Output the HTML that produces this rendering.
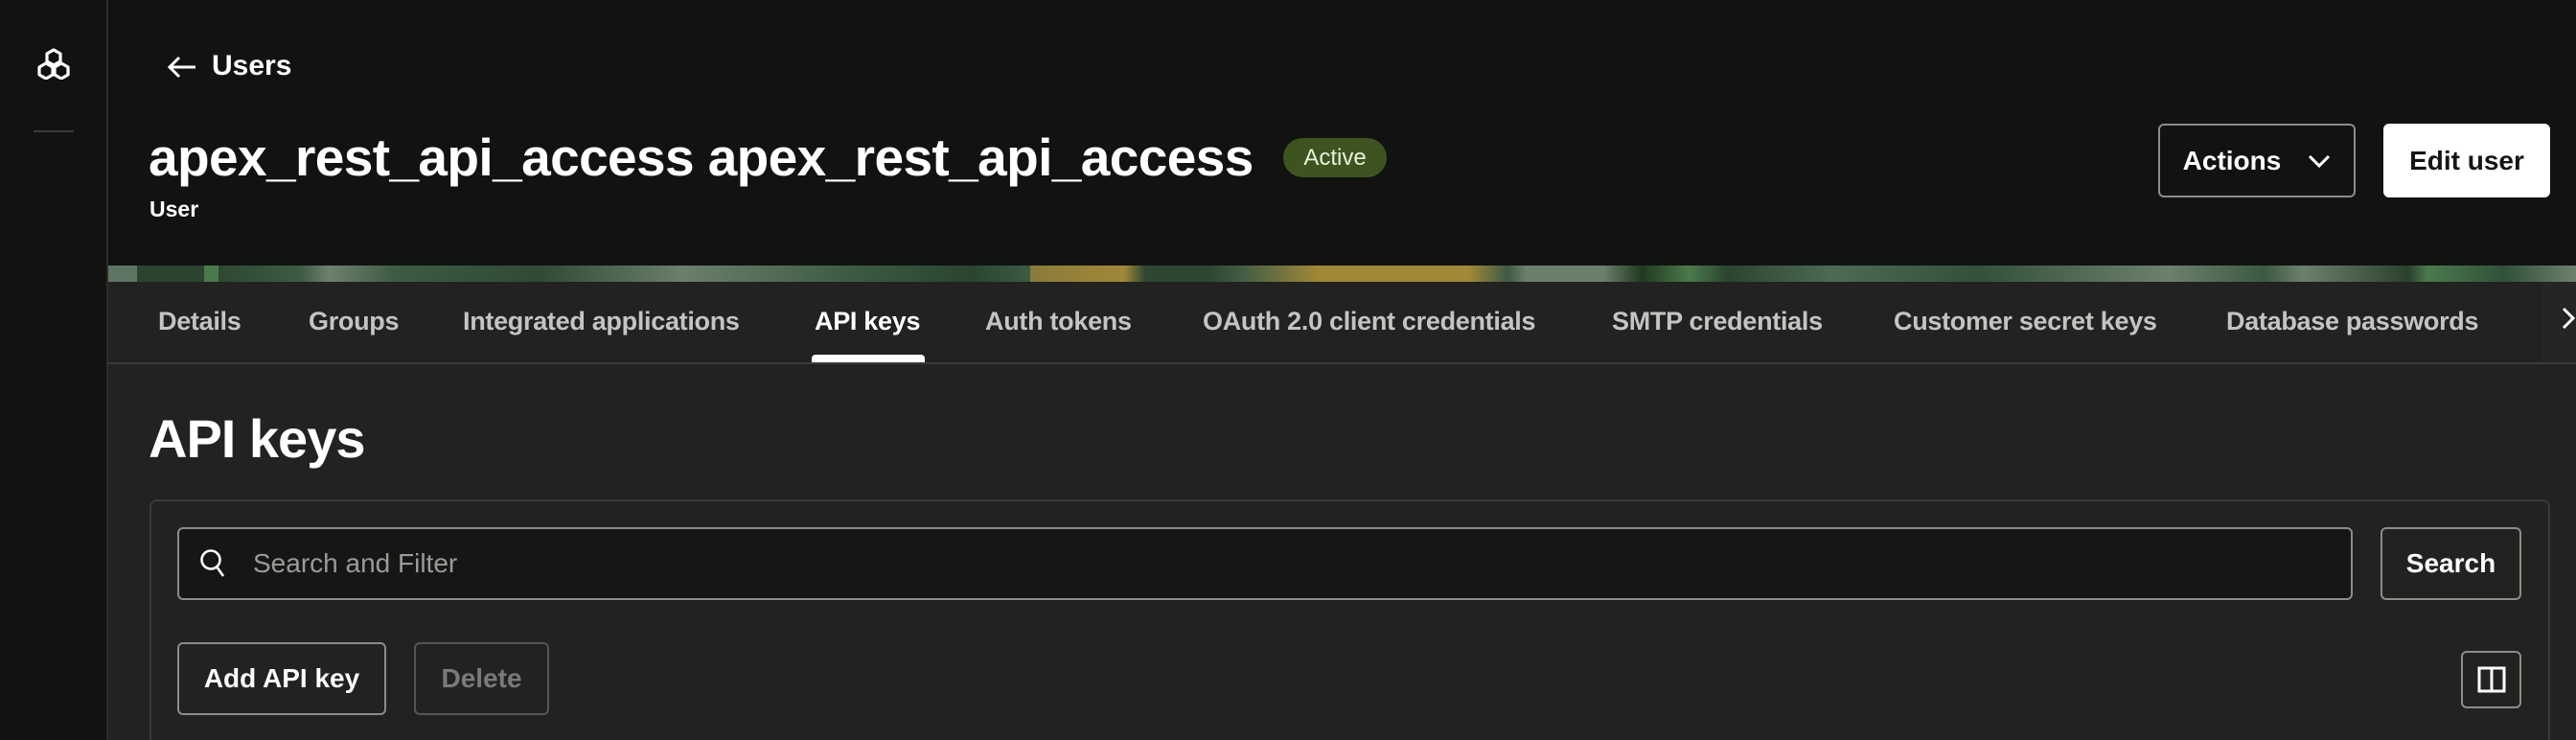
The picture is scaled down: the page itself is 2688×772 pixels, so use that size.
<!DOCTYPE html>
<html style="overflow:hidden;height:772px"><head><meta charset="utf-8"><style>
*{margin:0;padding:0;box-sizing:border-box}
body{width:2688px;height:772px;overflow:hidden;background:#222221;font-family:"Liberation Sans",sans-serif;color:#fff;position:relative}
.abs{position:absolute}
.side{left:0;top:0;width:113px;height:772px;background:#121211;border-right:2px solid #2c2c2b}
.hdr{left:113px;top:0;width:2575px;height:277px;background:#121211}
.banner{left:113px;top:277px;width:2575px;height:17px;background:linear-gradient(90deg,#5d7563 0,#5d7563 30px,#2b4430 30px,#2b4430 100px,#4a7a4c 100px,#4a7a4c 115px,#2e4832 115px,#3d5a43 200px,#6d806f 230px,#3d5a42 300px,#304a36 450px,#6a7f6c 600px,#3c5a41 780px,#2a4430 900px,#3d5a43 962px,#8a7a3a 962px,#a08838 1060px,#2e4732 1082px,#2e4732 1150px,#3f5b44 1180px,#a08838 1263px,#a08838 1420px,#3d5a43 1460px,#6c7f6d 1480px,#6c7f6d 1560px,#21391f 1600px,#4a7a4c 1650px,#2b4430 1690px,#4e6a54 1800px,#33503a 1950px,#6c806e 2150px,#3b5940 2250px,#6c806e 2290px,#2a412d 2400px,#4a7a4c 2420px,#31503a 2500px,#6d806f 2575px)}
.tabs{left:113px;top:294px;width:2575px;height:86px;border-bottom:2px solid #3a3a39;background:#222221}
.tab{position:absolute;top:26px;font-size:27px;color:#c4c4c2;white-space:nowrap;font-weight:bold;letter-spacing:-0.3px}
.btn{position:absolute;border:2px solid #8c8c8a;border-radius:6px;font-weight:bold;display:flex;align-items:center;justify-content:center;font-size:28px}
</style></head><body>
<div class="abs side">
 <svg class="abs" style="left:38px;top:50px" width="36" height="33" viewBox="0 0 36 33" fill="none" stroke="#fff" stroke-width="3.2" stroke-linejoin="round">
  <path d="M18 2l7 4v8l-7 4-7-4V6z"/><path d="M10 16l7 4v8l-7 4-7-4v-8z"/><path d="M26 16l7 4v8l-7 4-7-4v-8z"/>
 </svg>
 <div class="abs" style="left:35px;top:136px;width:42px;height:2px;background:#3a3a39"></div>
</div>
<div class="abs hdr"></div>
<svg class="abs" style="left:174px;top:58px" width="32" height="24" viewBox="0 0 32 24" fill="none" stroke="#fff" stroke-width="3"><path d="M30 12H3M13 2L3 12l10 10"/></svg>
<div class="abs" style="left:221px;top:52px;font-size:30px;font-weight:bold">Users</div>
<div class="abs" style="left:155px;top:132px;font-size:55px;font-weight:bold;letter-spacing:-0.6px;white-space:nowrap">apex_rest_api_access apex_rest_api_access</div>
<div class="abs" style="left:1339px;top:144px;width:108px;height:41px;border-radius:21px;background:#3d5420;color:#e8f0d8;font-size:24px;display:flex;align-items:center;justify-content:center">Active</div>
<div class="abs" style="left:156px;top:205px;font-size:23px;font-weight:bold">User</div>
<div class="btn" style="left:2252px;top:129px;width:206px;height:77px;background:#121211">Actions<svg style="margin-left:28px" width="24" height="14" viewBox="0 0 24 14" fill="none" stroke="#fff" stroke-width="3"><path d="M2 2l10 10L22 2"/></svg></div>
<div class="btn" style="left:2487px;top:129px;width:174px;height:77px;background:#fff;color:#161513;border-color:#fff">Edit user</div>
<div class="abs banner"></div>
<div class="abs tabs">
 <div class="tab" style="left:52px">Details</div>
 <div class="tab" style="left:209px">Groups</div>
 <div class="tab" style="left:370px">Integrated applications</div>
 <div class="tab" style="left:737px;color:#fff">API keys</div>
 <div class="tab" style="left:915px">Auth tokens</div>
 <div class="tab" style="left:1142px">OAuth 2.0 client credentials</div>
 <div class="tab" style="left:1569px">SMTP credentials</div>
 <div class="tab" style="left:1863px">Customer secret keys</div>
 <div class="tab" style="left:2210px">Database passwords</div>
 <div class="abs" style="left:734px;top:76px;width:118px;height:8px;background:#fff;border-radius:4px 4px 0 0"></div>
 <div class="abs" style="left:2540px;top:0;width:35px;height:84px;background:#252524"></div>
 <svg class="abs" style="left:2560px;top:26px" width="14" height="24" viewBox="0 0 14 24" fill="none" stroke="#fff" stroke-width="3"><path d="M2 2l10 10L2 22"/></svg>
</div>
<div class="abs" style="left:155px;top:425px;font-size:56px;font-weight:bold;letter-spacing:-1px">API keys</div>
<div class="abs" style="left:156px;top:521px;width:2505px;height:251px;border:2px solid #3a3a39;border-bottom:none;border-radius:8px 8px 0 0"></div>
<div class="abs" style="left:185px;top:550px;width:2270px;height:76px;background:#161614;border:2px solid #8c8c8a;border-radius:6px"></div>
<svg class="abs" style="left:208px;top:572px" width="30" height="32" viewBox="0 0 30 32" fill="none" stroke="#fff" stroke-width="2.6"><circle cx="12" cy="12" r="9.5"/><path d="M18 19l7 10"/></svg>
<div class="abs" style="left:264px;top:572px;font-size:28px;color:#9a9a98">Search and Filter</div>
<div class="btn" style="left:2484px;top:550px;width:147px;height:76px">Search</div>
<div class="btn" style="left:185px;top:670px;width:218px;height:76px">Add API key</div>
<div class="btn" style="left:432px;top:670px;width:141px;height:76px;border-color:#555553;color:#7a7a78">Delete</div>
<div class="btn" style="left:2568px;top:679px;width:63px;height:60px"><svg width="30" height="28" viewBox="0 0 30 28" fill="none" stroke="#fff" stroke-width="3"><rect x="2" y="2" width="26" height="24"/><path d="M15 2v24"/></svg></div>
</body></html>
